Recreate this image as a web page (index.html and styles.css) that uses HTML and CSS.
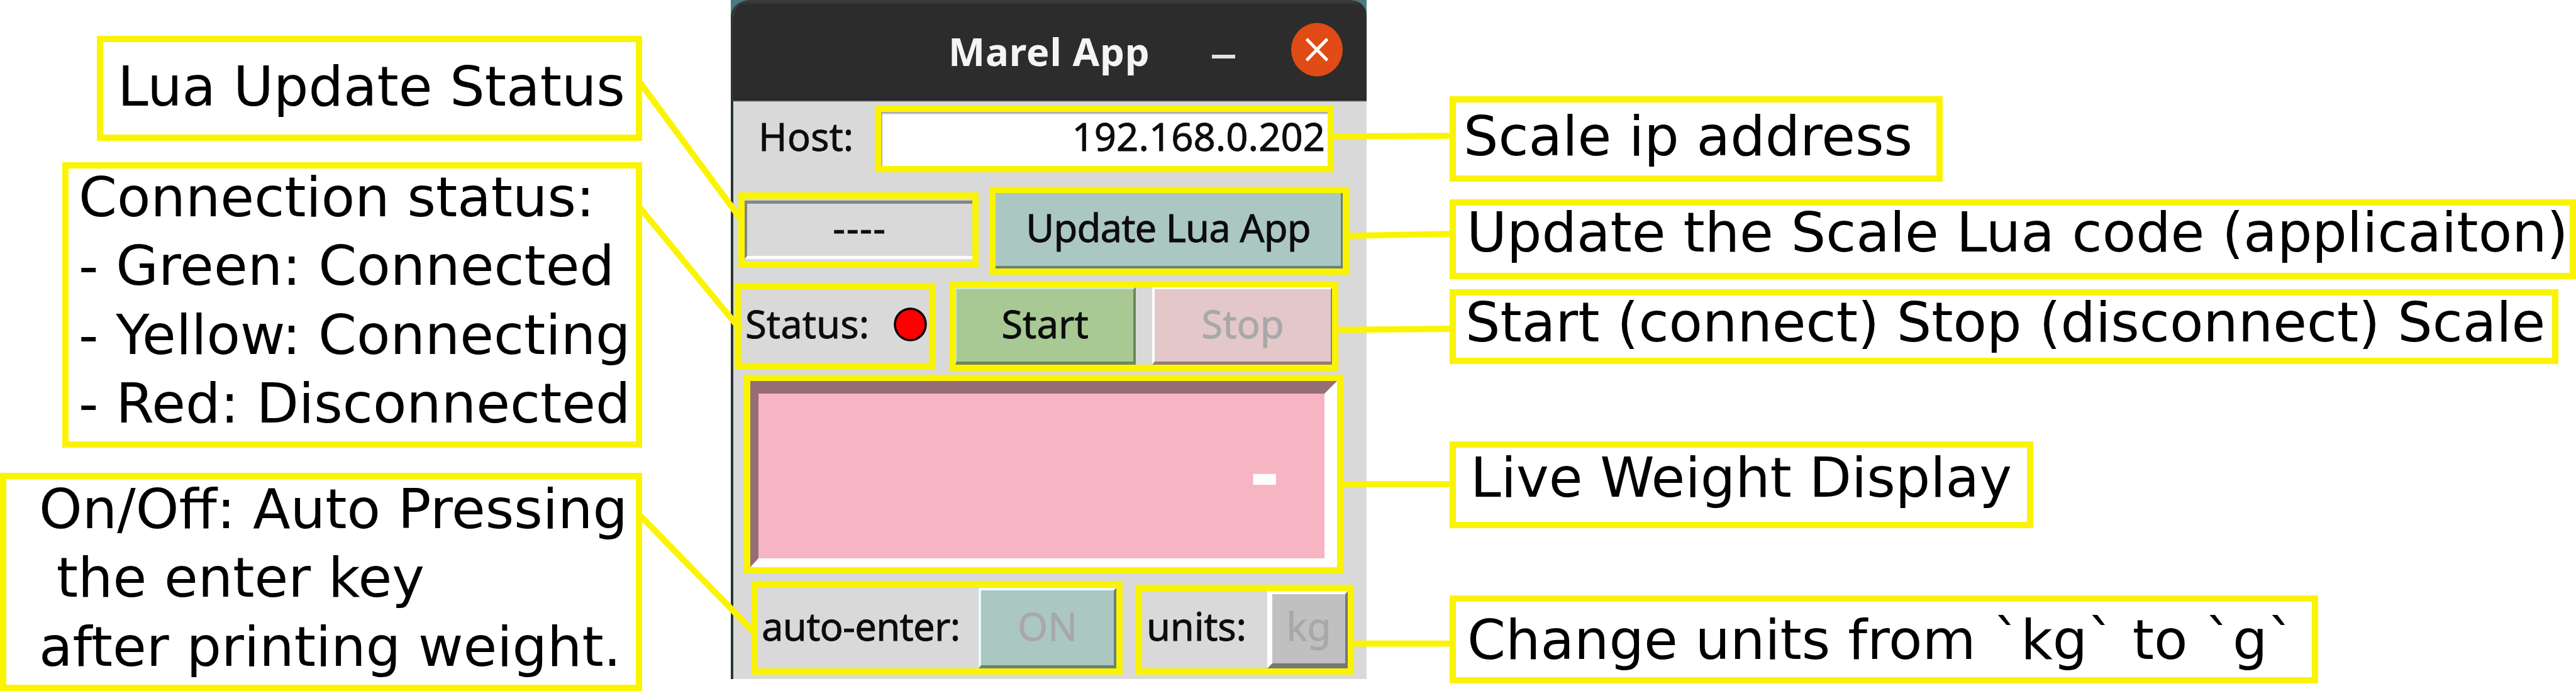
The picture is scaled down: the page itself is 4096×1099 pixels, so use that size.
FILE: index.html
```
<!DOCTYPE html>
<html lang="en">
<head>
<meta charset="utf-8">
<title>Marel App</title>
<link rel="stylesheet" href="styles.css">
</head>
<body>
<main class="figure">
  <section class="notes notes-left">
    <div class="note lua-status"><p>Lua Update Status</p></div>
    <div class="note connection"><p>Connection status:
- Green: Connected
- Yellow: Connecting
- Red: Disconnected</p></div>
    <div class="note auto-press"><p>On/Off: Auto Pressing
 the enter key
after printing weight.</p></div>
  </section>

  <section class="desktop">
    <div class="window">
      <header class="titlebar">
        <h1 class="title">Marel App</h1>
        <span class="minimize"></span>
        <svg class="close" viewBox="0 0 84 86">
          <ellipse cx="42" cy="43" rx="41" ry="42.5" fill="#e04b16"/>
          <path d="M25.5 26 58.500 60M58.500 26 25.500 60" stroke="#fff" stroke-width="5" fill="none"/>
        </svg>
      </header>
      <div class="row host-row">
        <span class="label host-label">Host:</span>
        <div class="mark host-mark"><span class="label ip">192.168.0.202</span></div>
      </div>
      <div class="row update-row">
        <div class="mark lua-mark"><div class="sunken"><span class="label dashes">----</span></div></div>
        <div class="mark update-mark"><div class="button update"><span class="label">Update Lua App</span></div></div>
      </div>
      <div class="row status-row">
        <div class="mark status-mark"><span class="label">Status:</span>
          <svg class="lamp" viewBox="0 0 53 54"><ellipse cx="26.500" cy="27" rx="24.500" ry="25" fill="#f00" stroke="#000" stroke-width="3.500"/></svg>
        </div>
        <div class="mark run-mark">
          <div class="button start"><span class="label">Start</span></div>
          <div class="button stop"><span class="label">Stop</span></div>
        </div>
      </div>
      <div class="row weight-row">
        <div class="mark weight-mark"><div class="display"><span class="weight">-</span></div></div>
      </div>
      <div class="row options-row">
        <div class="mark auto-mark"><span class="label auto-label">auto-enter:</span><div class="button on"><span class="label">ON</span></div></div>
        <div class="mark units-mark"><span class="label units-label">units:</span><div class="button kg"><span class="label">kg</span></div></div>
      </div>
    </div>
  </section>

  <section class="notes notes-right">
    <div class="note ip-note"><p>Scale ip address</p></div>
    <div class="note update-note"><p>Update the Scale Lua code (applicaiton)</p></div>
    <div class="note run-note"><p>Start (connect) Stop (disconnect) Scale</p></div>
    <div class="note weight-note"><p>Live Weight Display</p></div>
    <div class="note units-note"><p>Change units from `kg` to `g`</p></div>
  </section>

  <svg class="connectors" viewBox="0 0 4096 1099">
    <path d="M1016 129 1179 350M1016 328.500 1178 525M1016 818 1199 1005.500M2116 217 2310 216M2140 375.200 2310 371.800M2122 524.700 2310 522.900M2130 770H2310M2148 1023.700H2310"/>
  </svg>
</main>
</body>
</html>
```
FILE: styles.css
```
* { box-sizing: border-box; }
body { margin: 0; background: #fff; }
h1, p { margin: 0; }

.figure {
  position: relative;
  display: flex;
  align-items: flex-start;
  width: 4096px;
  height: 1099px;
  overflow: hidden;
  background: #fff;
}

/* Callouts on both sides of the window */
.notes { display: flex; flex-direction: column; flex: none; }
.notes-left { width: 1021px; align-items: flex-end; padding-top: 57px; }
.notes-right { width: 1791px; align-items: flex-start; margin-left: 132px; padding-top: 153px; }
.note {
  border: 10px solid #faf400;
  color: #000;
  font: 87.43px/109.3px "DejaVu Sans", sans-serif;
  white-space: pre;
}
.lua-status { width: 867px; height: 167px; padding: 17px 0 0 23px; }
.connection { width: 922px; height: 454px; margin-top: 34px; padding-left: 16px; }
.connection p { margin-top: -8px; }
.auto-press { width: 1021px; height: 347px; margin-top: 40px; padding-left: 52px; }
.auto-press p { margin-top: -6px; }
.ip-note { width: 784px; height: 136px; padding-left: 12px; }
.update-note { width: 1791px; height: 127px; margin-top: 28px; padding-left: 17px; }
.update-note p { margin-top: -11px; }
.run-note { width: 1763px; height: 119px; margin-top: 16px; padding-left: 15px; }
.run-note p { margin-top: -11px; }
.weight-note { width: 928px; height: 138px; margin-top: 123px; padding-left: 23px; }
.weight-note p { margin-top: -6px; }
.units-note { width: 1381px; height: 140px; margin-top: 107px; padding: 7px 0 0 18px; }

.connectors {
  position: absolute;
  inset: 0;
  width: 4096px;
  height: 1099px;
  fill: none;
  stroke: #faf400;
  stroke-width: 9.7px;
}

/* Application window */
.desktop { flex: none; width: 1011px; height: 1080px; margin-left: 141px; background: #4a7a80; }
.window {
  height: 1080px;
  border-left: 4px solid #2b3536;
  border-radius: 28px 24px 0 0;
  background: #d9d9d9;
  overflow: hidden;
}
.titlebar {
  display: flex;
  align-items: flex-start;
  height: 162px;
  padding-left: 342px;
  background: linear-gradient(#3a3a3a 0 3px, #2c2c2c 8px 156px, #222 159px, #777 161px, #d9d9d9 162px);
}
.title {
  width: 419px;
  padding-top: 39px;
  color: #f4f4f4;
  font: bold 61.7px/84px "Noto Sans", sans-serif;
  letter-spacing: 0.8px;
}
.minimize { width: 37px; height: 6px; margin-top: 87px; background: #e2e2e2; }
.close { width: 84px; height: 86px; margin: 36px 0 0 88px; }

.row { display: flex; align-items: flex-start; }
.label {
  color: #0c0c0c;
  font: 61.7px/84px "Noto Sans", sans-serif;
  white-space: nowrap;
  -webkit-text-stroke: 0.8px currentColor;
}
.mark { display: flex; align-items: flex-start; flex: none; border: 10px solid #faf400; }

.host-row { height: 135px; padding-left: 40px; }
.host-label { width: 185px; margin-top: 12px; }
.host-mark {
  justify-content: flex-end;
  width: 730px;
  height: 106px;
  margin-top: 6px;
  padding-right: 4px;
  background: #fff;
  box-shadow: inset 2px 3px 2px #aaa;
}
.ip { margin-top: -4px; }

.update-row { height: 150px; padding-left: 8px; }
.lua-mark { width: 382px; height: 120px; margin-top: 9px; padding: 3px 0 4px; }
.sunken {
  display: flex;
  justify-content: center;
  width: 362px;
  height: 93px;
  border: solid;
  border-width: 5px 0 5px 4px;
  border-color: #868686 #fff #fff #868686;
}
.dashes { margin-top: -5px; letter-spacing: 1.5px; }
.update-mark { width: 572px; height: 140px; margin-left: 17px; }
.button { display: flex; justify-content: center; border: solid; }
.update {
  width: 552px;
  height: 120px;
  padding-top: 12px;
  border-width: 0 3px 4px 0;
  border-color: #6a7f7b;
  background: #abc7c1;
}
.update .label { letter-spacing: -0.9px; }

.status-row { height: 149px; padding-left: 2px; }
.status-mark { width: 319px; height: 137px; margin-top: 3px; padding: 12px 0 0 7px; }
.status-mark .label { width: 236px; }
.lamp { width: 53px; height: 54px; margin-top: 17px; }
.run-mark { width: 619px; height: 143px; margin-left: 22px; }
.start {
  width: 287px;
  height: 123px;
  padding-top: 12px;
  border-width: 3px 4px 5px 2px;
  border-color: #d3e6c6 #6f8560 #6f8560 #d3e6c6;
  background: #a9c994;
}
.stop {
  width: 286px;
  height: 123px;
  margin-left: 26px;
  padding-top: 12px;
  border-width: 3px 2px 5px 4px;
  border-color: #fff #94797b #94797b #fff;
  background: #e3c7c9;
}
.stop .label, .on .label, .kg .label { color: #a8a8a8; }

.weight-row { height: 328px; padding-left: 17px; }
.weight-mark { width: 953px; height: 316px; }
.display {
  display: flex;
  justify-content: flex-end;
  width: 933px;
  height: 296px;
  padding-right: 73px;
  border: solid;
  border-width: 20px 20px 14px 13px;
  border-color: #956d74 #fff #fff #956d74;
  background: #f7b4c2;
}
.weight { color: #fff; font: bold 138px/188px "Noto Sans", sans-serif; margin-top: 26px; }

.options-row { padding-left: 29px; }
.auto-mark { width: 590px; height: 149px; }
.auto-label { width: 351px; margin-top: 19px; padding-left: 6px; letter-spacing: -0.8px; }
.on {
  width: 219px;
  height: 128px;
  margin-top: 1px;
  padding-top: 14px;
  border-width: 4px 4px 5px;
  border-color: #e9fbf8 #6a7f7b #6a7f7b #e9fbf8;
  background: #abc7c1;
}
.units-mark { width: 347px; height: 143px; margin: 6px 0 0 21px; }
.units-label { width: 199px; margin-top: 13px; padding-left: 7px; letter-spacing: -0.3px; }
.kg {
  width: 128px;
  height: 123px;
  padding-top: 8px;
  border-width: 5px 4px 8px 8px;
  border-color: #fff #777 #777 #fff;
  background: #c0c0c0;
}
```
